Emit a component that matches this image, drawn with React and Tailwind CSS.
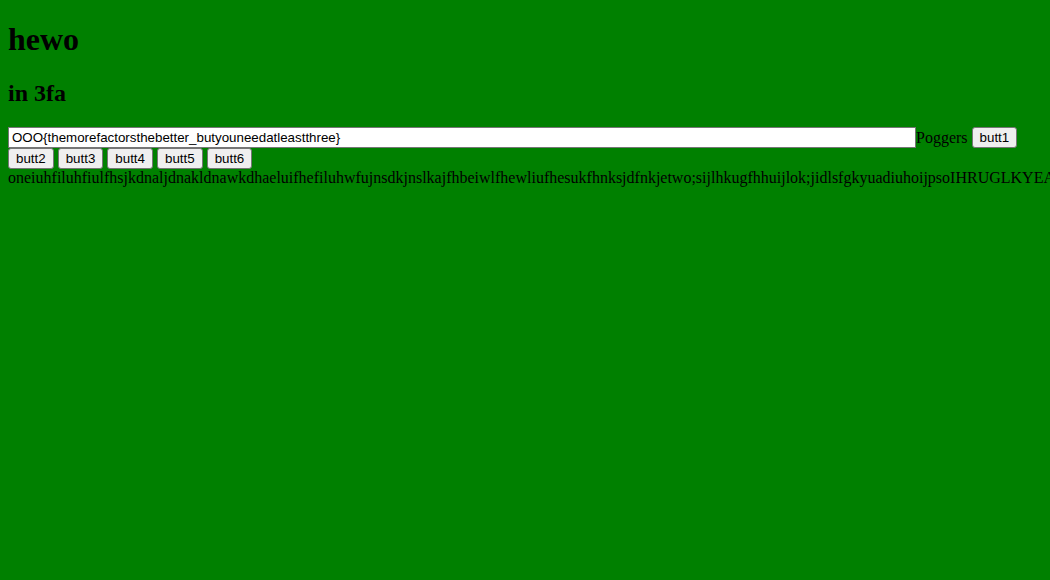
export default function App() {
  const btn =
    'inline-block h-[21px] px-[7px] align-top rounded-[3px] border border-[#767676] bg-[#efefef] text-[13.333px] leading-[17px] text-black font-["Liberation_Sans",Arial,sans-serif]'

  return (
    <div className="flow-root min-h-screen w-full bg-[#008000] px-2 text-black font-['Liberation_Serif','Times_New_Roman',serif] text-base">
      <h1 className="mt-[21.44px] mb-[21.44px] text-[32px] font-bold leading-[36.8px]">hewo</h1>
      <h2 className="mb-[19.92px] text-[24px] font-bold leading-[27.6px]">in 3fa</h2>
      <div className="w-[1034px] leading-[21px]">
        <input
          type="text"
          defaultValue="OOO{themorefactorsthebetter_butyouneedatleastthree}"
          className="inline-block h-[21px] w-[908px] align-top border border-[#767676] bg-white px-[3px] text-[13.333px] text-black font-['Liberation_Sans',Arial,sans-serif] outline-none"
        />
        <span>Poggers</span>{' '}
        <button className={btn}>butt1</button>{' '}
        <button className={btn}>butt2</button>{' '}
        <button className={btn}>butt3</button>{' '}
        <button className={btn}>butt4</button>{' '}
        <button className={btn}>butt5</button>{' '}
        <button className={btn}>butt6</button>
      </div>
      <div className="whitespace-nowrap leading-[18px]">
        oneiuhfiluhfiulfhsjkdnaljdnakldnawkdhaeluifhefiluhwfujnsdkjnslkajfhbeiwlfhewliufhesukfhnksjdfnkjetwo;sijlhkugfhhuijlok;jidlsfgkyuadiuhoijpsoIHRUGLKYEAFGHEWILUFHLIWEUHFNJKL
      </div>
    </div>
  )
}
